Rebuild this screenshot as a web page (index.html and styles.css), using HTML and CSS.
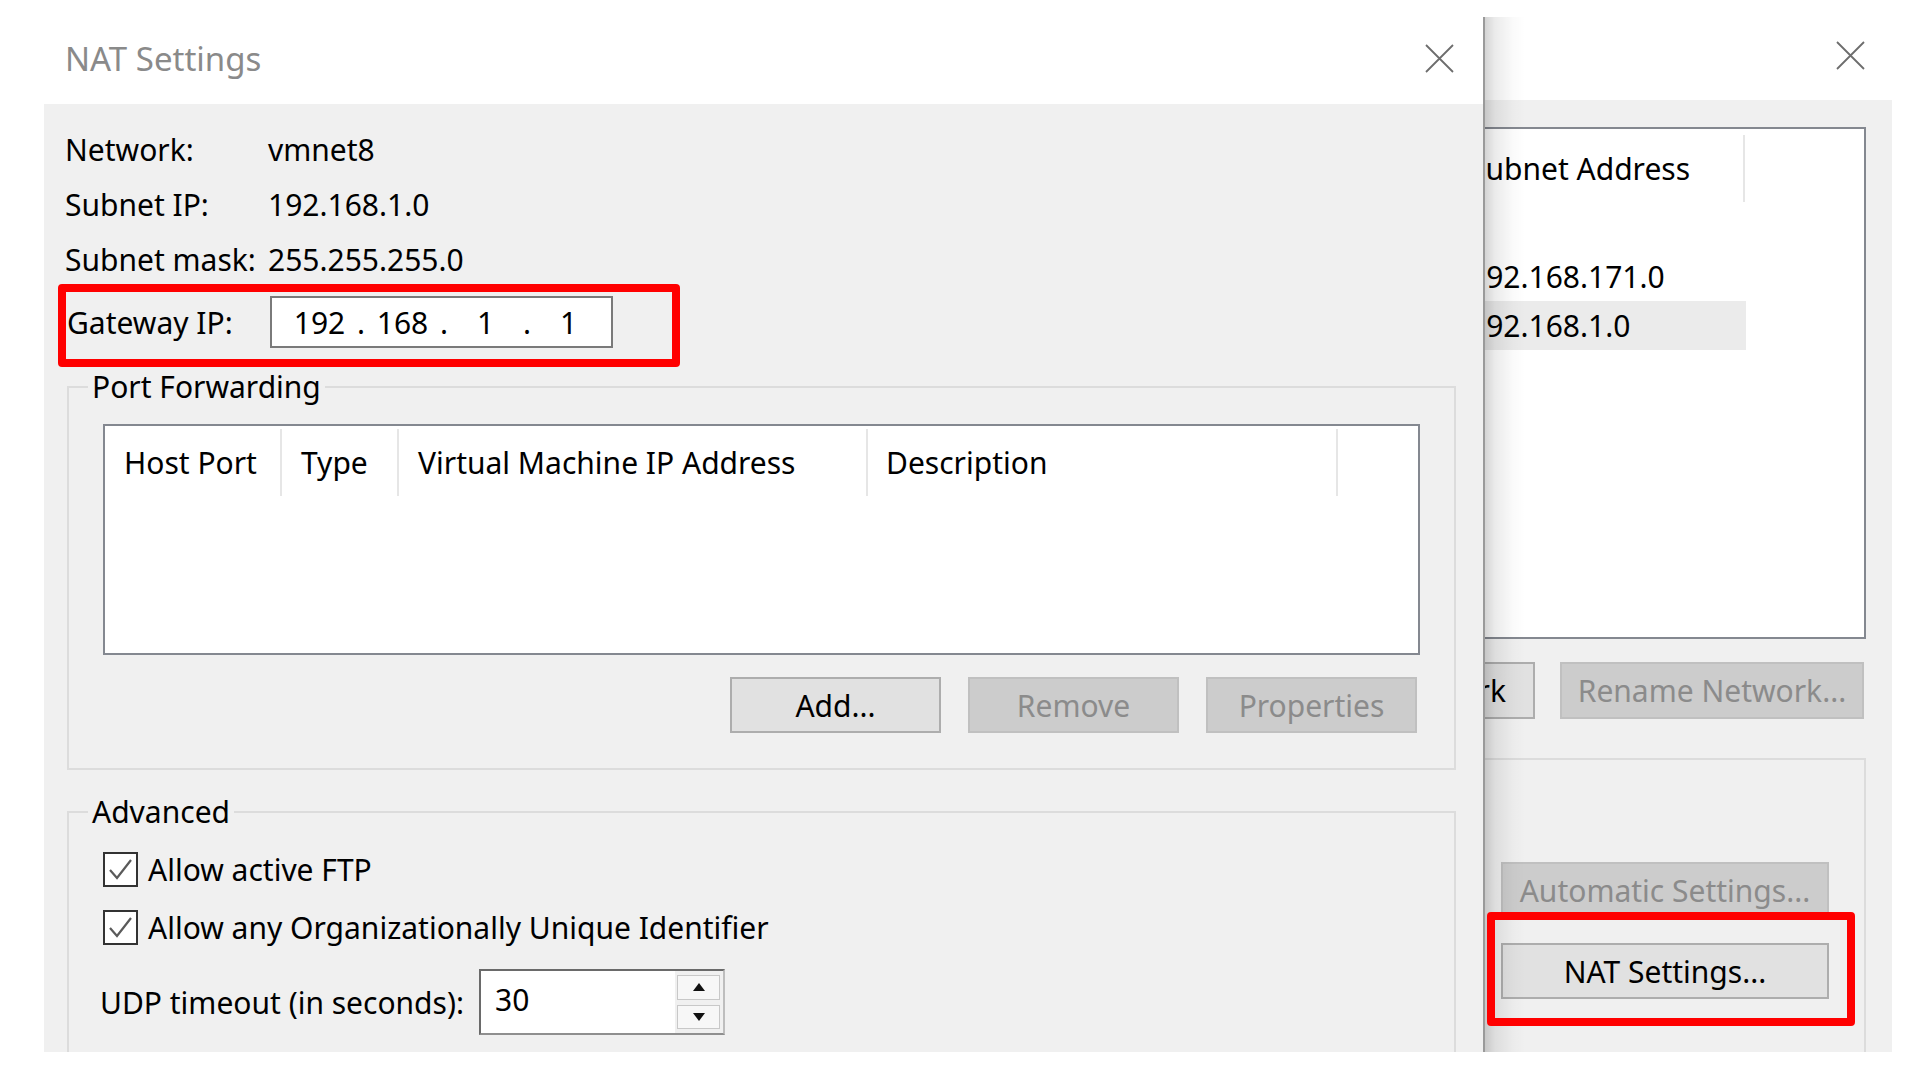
FILE: index.html
```html
<!DOCTYPE html>
<html lang="en">
<head>
<meta charset="utf-8">
<title>NAT Settings</title>
<link rel="stylesheet" href="styles.css">
</head>
<body>
<div class="desk">

  <section class="win win-back">
    <header class="titlebar">
      <span class="close"><svg viewBox="0 0 29 29" width="29" height="29"><path d="M1 1 L28 28 M28 1 L1 28" stroke="#6d6d6d" stroke-width="1.8" fill="none"/></svg></span>
    </header>
    <div class="body">
      <div class="netlist">
        <div class="nl-head"><div class="nl-col">Subnet Address</div></div>
        <div class="nl-rows">
          <div class="nl-row">192.168.171.0</div>
          <div class="nl-row sel">192.168.1.0</div>
        </div>
      </div>
      <div class="back-btns">
        <button class="btn wide-a">Network</button>
        <button class="btn dis wide-b">Rename Network...</button>
      </div>
      <div class="back-grp">
        <div class="stack">
          <button class="btn dis wide-c">Automatic Settings...</button>
          <button class="btn wide-c">NAT Settings...</button>
        </div>
      </div>
    </div>
  </section>

  <section class="win win-front">
    <header class="titlebar">
      <span class="title">NAT Settings</span>
      <span class="close"><svg viewBox="0 0 29 29" width="29" height="29"><path d="M1 1 L28 28 M28 1 L1 28" stroke="#6d6d6d" stroke-width="1.8" fill="none"/></svg></span>
    </header>
    <div class="body">
      <div class="info">
        <span>Network:</span><span>vmnet8</span>
        <span>Subnet IP:</span><span>192.168.1.0</span>
        <span>Subnet mask:</span><span>255.255.255.0</span>
      </div>
      <div class="gw-row">
        <span class="gw-label">Gateway IP:</span>
        <div class="ipbox">
          <span class="oct">192</span><span class="dot">.</span>
          <span class="oct">168</span><span class="dot">.</span>
          <span class="oct">1</span><span class="dot">.</span>
          <span class="oct">1</span>
        </div>
      </div>

      <fieldset class="grp pf">
        <legend>Port Forwarding</legend>
        <div class="list">
          <div class="list-head">
            <div class="col c1">Host Port</div>
            <div class="col c2">Type</div>
            <div class="col c3">Virtual Machine IP Address</div>
            <div class="col c4">Description</div>
          </div>
        </div>
        <div class="btns">
          <button class="btn">Add...</button>
          <button class="btn dis">Remove</button>
          <button class="btn dis">Properties</button>
        </div>
      </fieldset>

      <fieldset class="grp adv">
        <legend>Advanced</legend>
        <div class="chk-row first">
          <span class="box"><svg viewBox="0 0 31 31" width="31" height="31"><path d="M5 16 L12 24 L26 6" stroke="#5a5a5a" stroke-width="2.2" fill="none"/></svg></span>
          <span>Allow active FTP</span>
        </div>
        <div class="chk-row">
          <span class="box"><svg viewBox="0 0 31 31" width="31" height="31"><path d="M5 16 L12 24 L26 6" stroke="#5a5a5a" stroke-width="2.2" fill="none"/></svg></span>
          <span>Allow any Organizationally Unique Identifier</span>
        </div>
        <div class="udp-row">
          <span class="udp-label">UDP timeout (in seconds):</span>
          <div class="spin">
            <span class="spin-field">30</span>
            <span class="spin-btns">
              <span class="sbtn"><svg viewBox="0 0 12 8" width="12" height="8"><path d="M6 0 L12 8 L0 8 Z" fill="#111"/></svg></span>
              <span class="sbtn"><svg viewBox="0 0 12 8" width="12" height="8"><path d="M0 0 L12 0 L6 8 Z" fill="#111"/></svg></span>
            </span>
          </div>
        </div>
      </fieldset>
    </div>
  </section>

  <div class="mark mark-gw"></div>
  <div class="mark mark-nat"></div>
</div>
</body>
</html>
```

FILE: styles.css
```css
html, body {
  margin: 0;
  background: #ffffff;
}
body {
  font-family: "Noto Sans", "Open Sans", sans-serif;
  font-size: 30px;
  color: #000;
}
.desk {
  position: relative;
  width: 1920px;
  height: 1080px;
  overflow: hidden;
}

/* windows */
.win {
  position: absolute;
  display: flex;
  flex-direction: column;
  overflow: hidden;
}
.win-front {
  left: 44px;
  top: 0;
  width: 1439px;
  height: 1052px;
  z-index: 2;
}
.win-back {
  left: 1150px;
  top: 17px;
  width: 742px;
  height: 1035px;
  z-index: 1;
}
.win-back::before {
  content: "";
  position: absolute;
  left: 333px;
  top: 0;
  bottom: 0;
  width: 42px;
  z-index: 3;
  background: linear-gradient(to right,
    #9a9a9a 0, #9a9a9a 2px,
    rgba(0,0,0,0.17) 2px, rgba(0,0,0,0.08) 12px, rgba(0,0,0,0.02) 30px, rgba(0,0,0,0) 42px);
}

.titlebar {
  flex: none;
  display: flex;
  align-items: center;
  background: #fff;
  box-sizing: border-box;
}
.win-front .titlebar {
  height: 104px;
  padding: 12px 29px 0 21px;
}
.win-back .titlebar {
  height: 83px;
  padding: 0 27px 7px 0;
  justify-content: flex-end;
}
.title {
  flex: 1;
  font-size: 33px;
  color: #8a8a8a;
}
.close {
  display: flex;
  width: 29px;
  height: 29px;
}

.body {
  flex: 1;
  background: #f0f0f0;
  min-height: 0;
}
.win-front .body {
  padding-top: 18px;
}

/* info rows */
.info {
  display: grid;
  grid-template-columns: 203px auto;
  padding-left: 21px;
  line-height: 55px;
}
.gw-row {
  display: flex;
  align-items: center;
  height: 52px;
  margin-top: 9px;
  padding-left: 23px;
}
.gw-label {
  width: 203px;
}
.ipbox {
  width: 343px;
  height: 52px;
  box-sizing: border-box;
  border: 2px solid #7a7a7a;
  background: #fff;
  display: flex;
  align-items: center;
  padding-left: 13px;
}
.oct {
  width: 69px;
  text-align: center;
}
.dot {
  width: 14px;
  text-align: center;
}

/* group boxes */
.grp {
  border: 2px solid #dcdcdc;
  padding: 0;
  min-width: 0;
  margin: 0 27px 0 23px;
}
.grp legend {
  margin-left: 19px;
  padding: 0 4px;
  line-height: 40px;
}
.pf {
  margin-top: 19px;
}
.adv {
  margin-top: 22px;
  height: 400px;
}

.list {
  margin: 17px 34px 0 34px;
  height: 231px;
  box-sizing: border-box;
  border: 2px solid #848890;
  background: #fff;
}
.list-head {
  display: flex;
  margin-top: 3px;
  height: 67px;
}
.col {
  box-sizing: border-box;
  padding-left: 19px;
  border-right: 2px solid #e6e6e6;
  display: flex;
  align-items: center;
  white-space: nowrap;
}
.c1 { width: 177px; }
.c2 { width: 117px; }
.c3 { width: 469px; }
.c4 { width: 470px; padding-left: 18px; }

.btns {
  display: flex;
  justify-content: flex-end;
  gap: 27px;
  margin: 22px 37px 0 0;
  padding-bottom: 35px;
}
.btn {
  flex: none;
  width: 211px;
  height: 56px;
  box-sizing: border-box;
  border: 2px solid #adadad;
  background: #e1e1e1;
  font: inherit;
  color: #000;
  padding: 0;
  display: flex;
  align-items: center;
  justify-content: center;
  white-space: nowrap;
}
.btn.dis {
  background: #cccccc;
  border-color: #c0c0c0;
  color: #8b8b8b;
}

/* checkboxes */
.chk-row {
  display: flex;
  align-items: center;
  gap: 10px;
  height: 50px;
  margin: 8px 0 0 34px;
}
.chk-row.first {
  margin-top: 12px;
}
.box {
  width: 35px;
  height: 35px;
  box-sizing: border-box;
  border: 2px solid #333;
  background: #fff;
  display: flex;
}

.udp-row {
  display: flex;
  align-items: center;
  margin: 17px 0 0 31px;
  height: 66px;
}
.udp-label {
  width: 379px;
}
.spin {
  width: 246px;
  height: 66px;
  box-sizing: border-box;
  border: 2px solid #7a7a7a;
  border-color: #6a6a6a #bdbdbd #8f8f8f #6a6a6a;
  display: flex;
  background: #fff;
}
.spin-field {
  flex: 1;
  padding-left: 14px;
  line-height: 58px;
}
.spin-btns {
  width: 48px;
  background: #f0f0f0;
  display: flex;
  flex-direction: column;
  gap: 5px;
  padding: 4px 3px 4px 2px;
  box-sizing: border-box;
}
.sbtn {
  flex: 1;
  border: 1px solid #c8c8c8;
  background: #f7f7f7;
  display: flex;
  align-items: center;
  justify-content: center;
}

/* back window */
.win-back .body {
  display: flex;
  flex-direction: column;
  padding: 27px 26px 0 20px;
}
.netlist {
  flex: none;
  height: 512px;
  box-sizing: border-box;
  border: 2px solid #848890;
  background: #fff;
}
.nl-head {
  display: flex;
  margin-top: 6px;
  height: 67px;
}
.nl-col {
  margin-left: 297px;
  width: 276px;
  box-sizing: border-box;
  border-right: 2px solid #e6e6e6;
  display: flex;
  align-items: center;
  white-space: nowrap;
}
.nl-rows {
  margin-top: 50px;
}
.nl-row {
  width: 574px;
  height: 49px;
  box-sizing: border-box;
  padding-left: 297px;
  display: flex;
  align-items: center;
}
.nl-row.sel {
  background: #ebebeb;
}
.back-btns {
  display: flex;
  justify-content: flex-end;
  gap: 25px;
  margin: 23px 2px 0 0;
}
.back-btns .btn {
  height: 57px;
}
.wide-a {
  width: 160px;
  justify-content: flex-end;
  padding-right: 27px;
}
.wide-b { width: 304px; }
.wide-c { width: 328px; }
.back-grp {
  flex: 1;
  margin-top: 39px;
  border: 2px solid #dcdcdc;
  border-bottom: none;
  padding: 102px 0 0 329px;
}
.stack {
  display: flex;
  flex-direction: column;
  gap: 25px;
}

/* annotation boxes */
.mark {
  position: absolute;
  box-sizing: border-box;
  border: 8px solid #ff0000;
  border-radius: 4px;
  z-index: 5;
}
.mark-gw {
  left: 58px;
  top: 284px;
  width: 622px;
  height: 83px;
}
.mark-nat {
  left: 1487px;
  top: 912px;
  width: 368px;
  height: 114px;
}
```
